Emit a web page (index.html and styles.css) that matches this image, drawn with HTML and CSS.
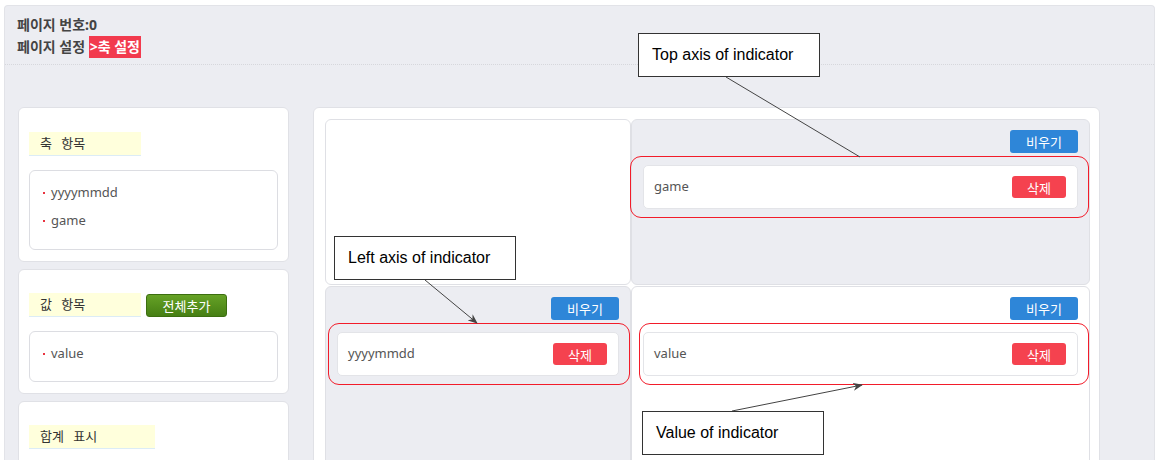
FILE: index.html
```html
<!DOCTYPE html>
<html lang="ko">
<head>
    <meta charset="UTF-8">
    <title>축 설정</title>
    <link rel="stylesheet" href="styles.css">
</head>
<body>
    <div class="page">
        <div class="info">
            <div>페이지 번호:0</div>
            <div>페이지 설정 <span class="crumb">&gt;축 설정</span></div>
        </div>

        <div class="content">
            <div class="side">
                <div class="card">
                    <div class="card-head"><span class="tag">축 항목</span></div>
                    <ul class="list">
                        <li>yyyymmdd</li>
                        <li>game</li>
                    </ul>
                </div>
                <div class="card">
                    <div class="card-head">
                        <span class="tag">값 항목</span>
                        <button class="btn-green">전체추가</button>
                    </div>
                    <ul class="list short">
                        <li>value</li>
                    </ul>
                </div>
                <div class="card last">
                    <div class="card-head"><span class="tag">합계 표시</span></div>
                </div>
            </div>

            <div class="board">
                <div class="cell white"></div>
                <div class="cell">
                    <div class="cell-top"><button class="btn-blue">비우기</button></div>
                    <div class="item">
                        <span>game</span>
                        <button class="btn-red">삭제</button>
                        <i class="hl"></i>
                    </div>
                </div>
                <div class="cell">
                    <div class="cell-top"><button class="btn-blue">비우기</button></div>
                    <div class="item">
                        <span>yyyymmdd</span>
                        <button class="btn-red">삭제</button>
                        <i class="hl hl-left"></i>
                    </div>
                </div>
                <div class="cell white">
                    <div class="cell-top"><button class="btn-blue">비우기</button></div>
                    <div class="item">
                        <span>value</span>
                        <button class="btn-red">삭제</button>
                        <i class="hl hl-value"></i>
                    </div>
                </div>
            </div>
        </div>
    </div>

    <!-- annotations -->
    <svg class="arrows" width="1159" height="467" viewBox="0 0 1159 467">
        <defs>
            <marker id="head" markerWidth="10" markerHeight="8" refX="9" refY="4" orient="auto" markerUnits="userSpaceOnUse">
                <path d="M0,0 L10,4 L0,8 L3,4 Z" fill="#444"/>
            </marker>
        </defs>
        <line x1="726" y1="77" x2="860" y2="157" stroke="#444" stroke-width="1"/>
        <line x1="425" y1="280" x2="477" y2="323" stroke="#444" stroke-width="1" marker-end="url(#head)"/>
        <line x1="732" y1="411" x2="862" y2="385" stroke="#444" stroke-width="1" marker-end="url(#head)"/>
    </svg>
    <div class="note note-top">Top axis of indicator</div>
    <div class="note note-left">Left axis of indicator</div>
    <div class="note note-value">Value of indicator</div>
</body>
</html>
```

FILE: styles.css
```css
body {
    margin: 0;
    background: #fff;
    font-family: "Noto Sans", "Noto Sans CJK KR", sans-serif;
    position: relative;
    width: 1159px;
    height: 467px;
    overflow: hidden;
}
.page {
    margin: 5px 4px 0 4px;
    height: 454px;
    background: #ecedf2;
    border: 1px solid #e2e3e8;
    border-bottom: none;
    border-radius: 4px 4px 0 0;
    overflow: hidden;
}
.info {
    padding: 8px 0 6px 12px;
    font-size: 14px;
    font-weight: bold;
    color: #444;
    line-height: 22px;
    border-bottom: 1px dotted #d6d7dc;
}
.crumb {
    background: #f23a4e;
    color: #fff;
    padding: 1px 1px 2px;
}
.content {
    display: flex;
    gap: 24px;
    padding: 42px 0 0 13px;
}
.side {
    width: 271px;
    display: flex;
    flex-direction: column;
    gap: 7px;
}
.card {
    background: #fff;
    border: 1px solid #e0e1e6;
    border-radius: 6px;
    padding: 23px 10px 11px 10px;
}
.card:first-child {
    padding-top: 24px;
}
.card.last {
    height: 120px;
}
.card-head {
    display: flex;
    align-items: center;
    gap: 5px;
}
.tag {
    display: inline-block;
    width: 112px;
    box-sizing: border-box;
    background: #ffffdc;
    border-bottom: 1px solid #dcecf6;
    padding: 0 0 0 11px;
    height: 24px;
    line-height: 23px;
    font-size: 13px;
    color: #333;
    word-spacing: 6px;
}
.card.last .tag {
    width: 126px;
}
.btn-green {
    width: 81px;
    height: 23px;
    border: 1px solid #3c6e10;
    border-radius: 3px;
    background: linear-gradient(#66a226, #467f14);
    color: #fff;
    font-family: inherit;
    font-size: 13px;
    padding: 0;
}
.list {
    list-style: none;
    margin: 14px 0 0;
    padding: 7px 0 15px 13px;
    border: 1px solid #dcdde2;
    border-radius: 6px;
    font-size: 13px;
    color: #555;
    line-height: 28px;
}
.list.short {
    padding-bottom: 14px;
    height: 51px;
    box-sizing: border-box;
}
.list li::before {
    content: "";
    display: inline-block;
    width: 2px;
    height: 2px;
    background: #e8333f;
    vertical-align: middle;
    margin-right: 6px;
    position: relative;
    top: -1px;
}
.board {
    width: 787px;
    box-sizing: border-box;
    background: #fff;
    border: 1px solid #e0e1e6;
    border-radius: 6px;
    padding: 11px 9px 0 11px;
    display: grid;
    grid-template-columns: 306px 459px;
    grid-template-rows: 166px 220px;
    row-gap: 1px;
}
.cell {
    background: #ecedf2;
    border: 1px solid #dfe0e5;
    border-radius: 6px;
    padding: 10px 11px 0 11px;
}
.cell.white {
    background: #fff;
}
.cell-top {
    display: flex;
    justify-content: flex-end;
}
.btn-blue {
    width: 68px;
    height: 23px;
    border: none;
    border-radius: 3px;
    background: #2e86d8;
    color: #fff;
    font-family: inherit;
    font-size: 13px;
    padding: 0;
}
.item {
    position: relative;
    margin-top: 12px;
    height: 44px;
    box-sizing: border-box;
    background: #fff;
    border: 1px solid #e3e4e8;
    border-radius: 5px;
    display: flex;
    align-items: center;
    justify-content: space-between;
    padding: 0 11px 0 10px;
    font-size: 13px;
    color: #555;
}
.item span {
    margin-top: -2px;
}
.btn-red {
    width: 54px;
    height: 22px;
    border: none;
    border-radius: 3px;
    background: #f5424f;
    color: #fff;
    font-family: inherit;
    font-size: 13px;
    padding: 0;
}
.hl {
    position: absolute;
    top: -10px;
    bottom: -10px;
    left: -14px;
    right: -12px;
    border: 1px solid #f21c2a;
    border-radius: 11px;
    pointer-events: none;
}
.hl-left {
    left: -10px;
    right: -12px;
}
.hl-value {
    left: -5px;
}
.arrows {
    position: absolute;
    left: 0;
    top: 0;
    pointer-events: none;
}
.note {
    position: absolute;
    width: 182px;
    height: 44px;
    box-sizing: border-box;
    background: #fff;
    border: 1.5px solid #333;
    font-family: "Liberation Sans", Arial, sans-serif;
    font-size: 16px;
    color: #000;
    line-height: 41px;
    padding-left: 13px;
}
.note-top {
    left: 638px;
    top: 33px;
}
.note-left {
    left: 334px;
    top: 236px;
}
.note-value {
    left: 642px;
    top: 411px;
}
```
